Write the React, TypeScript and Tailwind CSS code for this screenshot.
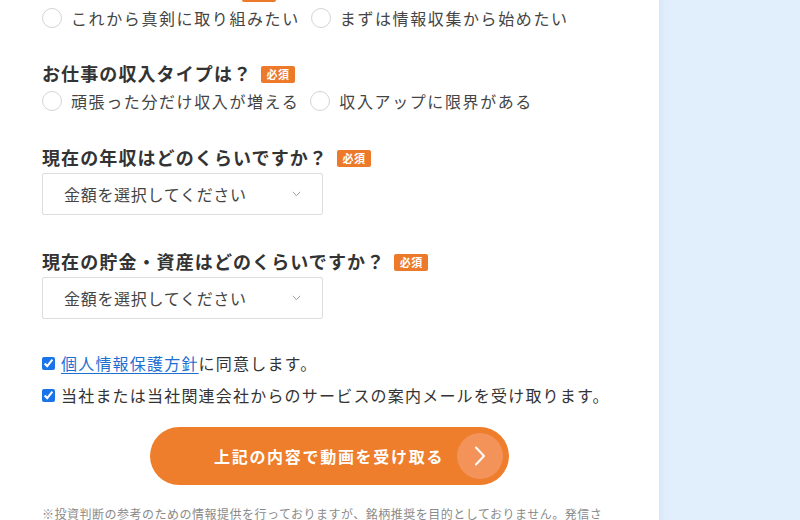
import React from "react";

function Badge() {
  return (
    <span className="ml-[9px] inline-flex h-[17px] w-[34px] items-center justify-center rounded-[2px] bg-[#ec7a2a] text-[11px] font-bold leading-none tracking-[0.5px] text-white">
      必須
    </span>
  );
}

function Heading({ text, low }: { text: string; low?: boolean }) {
  return (
    <div className="flex h-[26px] items-center">
      <span className="text-[18px] font-bold leading-[26px] tracking-[1.1px] text-[#333333]">{text}</span>
      <span className={low ? "mt-[9px] flex" : "mt-[3px] flex"}>
        <Badge />
      </span>
    </div>
  );
}

function Radio({ label }: { label: string }) {
  return (
    <label className="flex items-center">
      <span className="h-[20px] w-[20px] rounded-full border-[1.5px] border-[#d4d4d4] bg-white" />
      <span className="ml-[9px] text-[16px] leading-[26px] tracking-[1.6px] text-[#444444]">{label}</span>
    </label>
  );
}

function RadioRow({ a, b, first }: { a: string; b: string; first?: boolean }) {
  return (
    <div className={first ? "mt-[3px] flex h-[26px] items-center gap-[11px]" : "mt-[2px] flex h-[26px] items-center gap-[11px]"}>
      <Radio label={a} />
      <Radio label={b} />
    </div>
  );
}

function Select() {
  return (
    <div className="mt-[3px] flex h-[42px] w-[281px] items-center justify-between rounded-[2px] border border-[#dddddd] bg-white pl-[21px] pr-[21px]">
      <span className="text-[16px] leading-[24px] tracking-[0.7px] text-[#444444]">金額を選択してください</span>
      <svg width="9" height="6" viewBox="0 0 9 6" fill="none">
        <path d="M0.8 1 L4.5 4.6 L8.2 1" stroke="#9a9a9a" strokeWidth="1" />
      </svg>
    </div>
  );
}

function Check({ children }: { children: React.ReactNode }) {
  return (
    <label className="flex h-[24px] items-center">
      <input type="checkbox" defaultChecked className="m-0 h-[13px] w-[13px] accent-[#1a73e8]" />
      <span className="ml-[6px] text-[16px] leading-[24px] tracking-[1.2px] text-[#333333]">{children}</span>
    </label>
  );
}

export default function App() {
  return (
    <div className="flex h-[520px] w-full overflow-hidden bg-white font-['Noto_Sans_CJK_JP',sans-serif]">
      <div className="w-[659px] shrink-0 bg-white pl-[42px]">
        <div className="-mt-[24px] w-[575px]">
          <Heading low text="資産運用への姿勢は？" />
          <RadioRow first a="これから真剣に取り組みたい" b="まずは情報収集から始めたい" />

          <div className="mt-[29px]">
            <Heading text="お仕事の収入タイプは？" />
            <RadioRow a="頑張った分だけ収入が増える" b="収入アップに限界がある" />
          </div>

          <div className="mt-[30px]">
            <Heading text="現在の年収はどのくらいですか？" />
            <Select />
          </div>

          <div className="mt-[33px]">
            <Heading text="現在の貯金・資産はどのくらいですか？" />
            <Select />
          </div>

          <div className="mt-[32px] flex flex-col gap-[8px]">
            <Check>
              <a className="text-[#1f6fd0] underline underline-offset-[3px]">個人情報保護方針</a>に同意します。
            </Check>
            <Check>当社または当社関連会社からのサービスの案内メールを受け取ります。</Check>
          </div>

          <div className="mt-[20px] flex justify-center">
            <button className="flex h-[58px] w-[359px] items-center rounded-full bg-[#ee7d2c] pl-[64px] pr-[6px]">
              <span className="text-[16px] font-bold leading-[24px] tracking-[1.7px] text-white">上記の内容で動画を受け取る</span>
              <span className="ml-auto flex h-[46px] w-[46px] items-center justify-center rounded-full bg-[#f3935a]">
                <svg width="12" height="20" viewBox="0 0 12 20" fill="none">
                  <path d="M2 1.5 L10 10 L2 18.5" stroke="white" strokeWidth="2" strokeLinecap="round" strokeLinejoin="round" />
                </svg>
              </span>
            </button>
          </div>

          <p className="mt-[19px] w-[570px] text-[12px] leading-[20px] tracking-[0.5px] text-[#8a8a8a]">
            ※投資判断の参考のための情報提供を行っておりますが、銘柄推奨を目的としておりません。発信される情報は正確性・完全性を保証するものではありません。
          </p>
        </div>
      </div>
      <div className="flex-1 bg-[#e1effd] shadow-[inset_8px_0_8px_-6px_rgba(120,150,190,0.12)]" />
    </div>
  );
}
